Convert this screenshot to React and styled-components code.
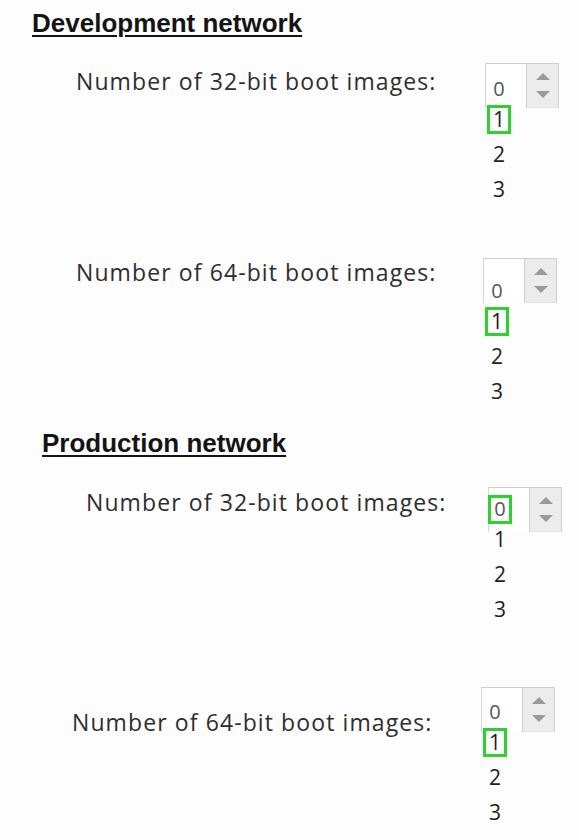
import React from 'react';
import styled, { createGlobalStyle } from 'styled-components';

const GlobalStyle = createGlobalStyle`
  html, body {
    margin: 0;
    padding: 0;
    background: #fdfdfd;
  }
`;

const Page = styled.div`
  width: 579px;
  height: 840px;
  padding-top: 8px;
  box-sizing: border-box;
  overflow: hidden;
  background: #fdfdfd;
`;

const Heading = styled.h2`
  margin: ${p => p.$top}px 0 0 ${p => p.$left}px;
  font-family: 'Liberation Sans', Arial, sans-serif;
  font-size: 26px;
  line-height: 30px;
  font-weight: 700;
  color: #141414;
  text-decoration: underline;
  text-decoration-thickness: 2px;
  text-underline-offset: 3px;
`;

const Row = styled.div`
  display: flex;
  align-items: flex-start;
  margin-top: ${p => p.$top}px;
  padding-left: ${p => p.$indent}px;
`;

const Label = styled.div`
  width: 362px;
  flex: none;
  margin-top: ${p => p.$top}px;
  margin-right: ${p => p.$gap}px;
  font-family: 'Open Sans', 'Liberation Sans', sans-serif;
  font-size: 23px;
  letter-spacing: 1.1px;
  line-height: 30px;
  color: #2e2e2e;
  white-space: nowrap;
`;

const Picker = styled.div`
  width: 74px;
  flex: none;
`;

const Frame = styled.div`
  display: flex;
  height: 45px;
  box-sizing: border-box;
`;

const Field = styled.div`
  width: 40px;
  border-top: 1px solid #cfcfcf;
  border-left: 1px solid #d6d6d6;
  background: #fff;
`;

const Buttons = styled.div`
  flex: 1;
  display: flex;
  flex-direction: column;
  align-items: center;
  justify-content: space-around;
  padding: 4px 0;
  background: #ececec;
  border: 1px solid #cfcfcf;
  border-bottom-color: #e2e2e2;
`;

const Arrow = styled.span`
  width: 0;
  height: 0;
  border-left: 7px solid transparent;
  border-right: 7px solid transparent;
  ${p =>
    p.$down
      ? 'border-top: 7px solid #9a9a9a;'
      : 'border-bottom: 7px solid #9a9a9a;'}
`;

const OptionList = styled.div`
  display: flex;
  flex-direction: column;
  align-items: flex-start;
  margin-top: ${p => -32 + p.$shift}px;
  padding-left: ${p => 2 + p.$nudge}px;
  font-family: 'Open Sans', 'Liberation Sans', sans-serif;
  font-size: 21px;
  color: #1e1e1e;
`;

const Option = styled.div`
  height: ${p => (p.$first ? 26 : 35)}px;
  display: flex;
  align-items: center;
  color: ${p => (p.$first ? '#555' : '#1e1e1e')};
  font-size: ${p => (p.$first ? 20 : 21)}px;
`;

const Digit = styled.span`
  display: flex;
  align-items: center;
  justify-content: center;
  box-sizing: border-box;
  width: 24px;
  height: 29px;
  border: 3px solid ${p => (p.$selected ? '#2fd12f' : 'transparent')};
  line-height: 1;
`;

const OPTIONS = [0, 1, 2, 3];

function Spinner({ selected, shift = 0, nudge = 0 }) {
  return (
    <Picker>
      <Frame>
        <Field />
        <Buttons>
          <Arrow />
          <Arrow $down />
        </Buttons>
      </Frame>
      <OptionList $shift={shift} $nudge={nudge}>
        {OPTIONS.map(n => (
          <Option key={n} $first={n === 0}>
            <Digit $selected={n === selected}>{n}</Digit>
          </Option>
        ))}
      </OptionList>
    </Picker>
  );
}

function BootRow({ bits, selected, top, indent, gap, labelTop, shift, nudge }) {
  return (
    <Row $top={top} $indent={indent}>
      <Label $top={labelTop} $gap={gap}>
        Number of {bits}-bit boot images:
      </Label>
      <Spinner selected={selected} shift={shift} nudge={nudge} />
    </Row>
  );
}

export default function App() {
  return (
    <Page>
      <GlobalStyle />
      <Heading $top={0} $left={32}>
        Development network
      </Heading>
      <BootRow bits={32} selected={1} top={25} indent={76} gap={47} labelTop={3} shift={0} nudge={0} />
      <BootRow bits={64} selected={1} top={51} indent={76} gap={45} labelTop={-1} shift={7} nudge={0} />

      <Heading $top={19} $left={42}>
        Production network
      </Heading>
      <BootRow bits={32} selected={0} top={29} indent={86} gap={40} labelTop={0} shift={-4} nudge={-3} />
      <BootRow bits={64} selected={1} top={60} indent={72} gap={47} labelTop={20} shift={-1} nudge={0} />
    </Page>
  );
}
